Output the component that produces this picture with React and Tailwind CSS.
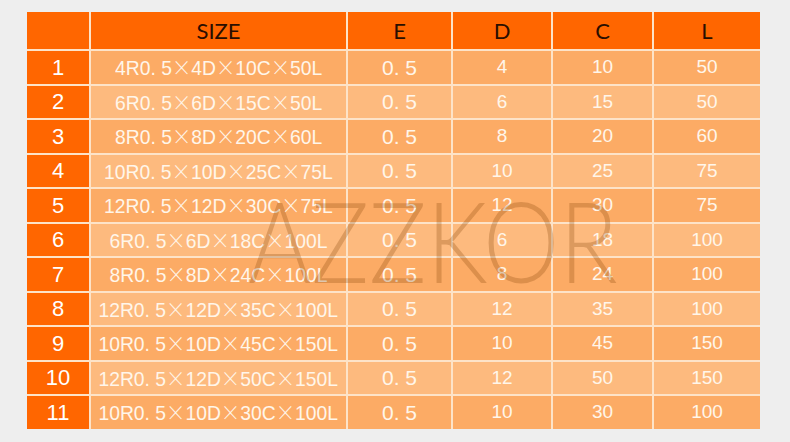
const rows = [
  ['1', '4R0. 5×4D×10C×50L', '0. 5', '4', '10', '50'],
  ['2', '6R0. 5×6D×15C×50L', '0. 5', '6', '15', '50'],
  ['3', '8R0. 5×8D×20C×60L', '0. 5', '8', '20', '60'],
  ['4', '10R0. 5×10D×25C×75L', '0. 5', '10', '25', '75'],
  ['5', '12R0. 5×12D×30C×75L', '0. 5', '12', '30', '75'],
  ['6', '6R0. 5×6D×18C×100L', '0. 5', '6', '18', '100'],
  ['7', '8R0. 5×8D×24C×100L', '0. 5', '8', '24', '100'],
  ['8', '12R0. 5×12D×35C×100L', '0. 5', '12', '35', '100'],
  ['9', '10R0. 5×10D×45C×150L', '0. 5', '10', '45', '150'],
  ['10', '12R0. 5×12D×50C×150L', '0. 5', '12', '50', '150'],
  ['11', '10R0. 5×10D×30C×100L', '0. 5', '10', '30', '100'],
];

const headers = ['', 'SIZE', 'E', 'D', 'C', 'L'];

// full-width × rendered with the CJK face, the rest slightly condensed
const SizeText = ({ text }) => (
  <span className="inline-block whitespace-pre scale-x-[0.92] text-[21px]">
    {text.split(/(×)/).map((part, i) =>
      part === '×' ? (
        <span key={i} className="font-['Noto_Sans_CJK_JP',sans-serif] font-light">
          {part}
        </span>
      ) : (
        <span key={i}>{part}</span>
      )
    )}
  </span>
);

export default function App() {
  return (
    <div className="w-[790px] h-[442px] bg-[#eeeeee] pt-[12px] pl-[27px] font-['Liberation_Sans','Noto_Sans_CJK_JP',sans-serif]">
      <div className="relative w-[733px] grid grid-cols-[62px_255px_103px_98px_99px_106px] gap-[2px] bg-[#fde3c8]">
        {headers.map((h, i) => (
          <div
            key={i}
            className="h-[37px] bg-[#ff6600] flex items-center justify-center text-[22px] text-[#2a0e00] font-['Lato',sans-serif]"
          >
            {h}
          </div>
        ))}
        {rows.map((r, ri) =>
          r.map((c, ci) => (
            <div
              key={ri + '-' + ci}
              className={
                'h-[32.5px] flex items-center justify-center ' +
                (ci === 0
                  ? 'bg-[#ff6600] text-white text-[22px]'
                  : (ri % 2 === 0 ? 'bg-[#fcab65] ' : 'bg-[#fdba7e] ') + 'text-[#fff6ea] text-[19px]') +
                (ci === 2 ? ' whitespace-pre text-[21px]' : '')
              }
            >
              {ci === 1 ? <SizeText text={c} /> : c}
            </div>
          ))
        )}
        <div className="pointer-events-none absolute left-[166px] top-[172px] w-[480px] text-center scale-x-[0.86] text-[112px] leading-none font-['Lato',sans-serif] font-light text-[#7a3a00]/25">
          AZZKOR
        </div>
      </div>
    </div>
  );
}
